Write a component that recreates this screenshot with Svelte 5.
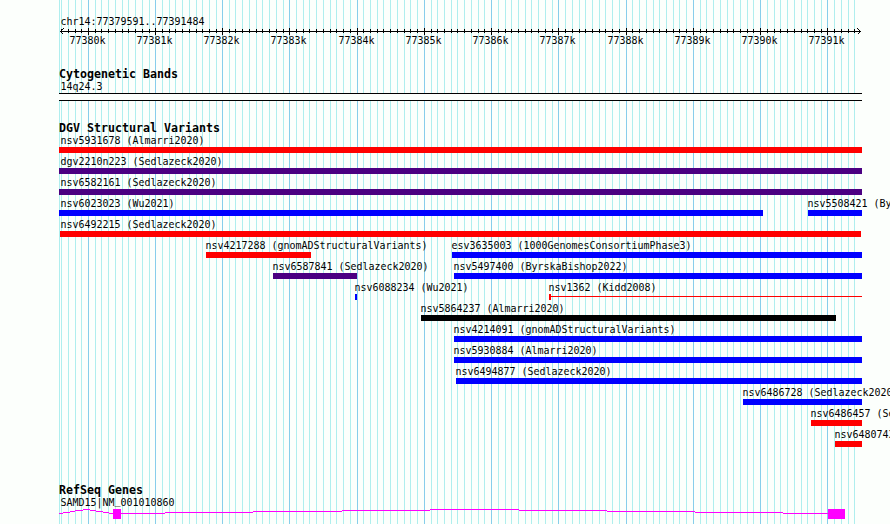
<script>
	// panel geometry
	const regionStart = 77379591;
	const regionEnd = 77391484;
	const panelLeft = 60;
	const scale = 800 / (regionEnd - regionStart);

	// lines sit up to half a pixel further right at the start of the panel
	const toX = (pos) => {
		const drift = pos < 77382000 ? 0.45 : -0.01;
		return Math.round(panelLeft + (pos - regionStart) * scale + drift);
	};

	const minor = [];
	const major = [];
	for (let pos = 77379600; pos <= regionEnd; pos += 100) {
		if (pos % 1000 === 0) {
			major.push({ x: toX(pos), label: pos / 1000 + 'k' });
		} else {
			minor.push(toX(pos));
		}
	}

	const red = '#ff0000';
	const blue = '#0000ff';
	const indigo = '#4b0082';

	// every row is 21px high: label on top, bar underneath
	const rows = [
		[{ name: 'nsv5931678 (Almarri2020)', from: 59, to: 862, color: red }],
		[{ name: 'dgv2210n223 (Sedlazeck2020)', from: 59, to: 862, color: indigo }],
		[{ name: 'nsv6582161 (Sedlazeck2020)', from: 59, to: 862, color: indigo }],
		[
			{ name: 'nsv6023023 (Wu2021)', from: 59, to: 763, color: blue },
			{ name: 'nsv5508421 (ByrskaBishop2022)', from: 808, to: 862, color: blue }
		],
		[{ name: 'nsv6492215 (Sedlazeck2020)', from: 60, to: 861, color: red }],
		[
			{ name: 'nsv4217288 (gnomADStructuralVariants)', from: 206, to: 311, color: red },
			{ name: 'esv3635003 (1000GenomesConsortiumPhase3)', from: 452, to: 862, color: blue }
		],
		[
			{ name: 'nsv6587841 (Sedlazeck2020)', from: 273, to: 357, color: indigo },
			{ name: 'nsv5497400 (ByrskaBishop2022)', from: 454, to: 862, color: blue }
		],
		[
			{ name: 'nsv6088234 (Wu2021)', from: 355, to: 357, color: blue },
			{ name: 'nsv1362 (Kidd2008)', from: 549, to: 551, color: red, lineTo: 862 }
		],
		[{ name: 'nsv5864237 (Almarri2020)', from: 421, to: 836, color: '#000000' }],
		[{ name: 'nsv4214091 (gnomADStructuralVariants)', from: 454, to: 862, color: blue }],
		[{ name: 'nsv5930884 (Almarri2020)', from: 454, to: 862, color: blue }],
		[{ name: 'nsv6494877 (Sedlazeck2020)', from: 456, to: 862, color: blue }],
		[{ name: 'nsv6486728 (Sedlazeck2020)', from: 743, to: 862, color: blue }],
		[{ name: 'nsv6486457 (Sedlazeck2020)', from: 811, to: 862, color: red }],
		[{ name: 'nsv6480743 (Sedlazeck2020)', from: 835, to: 862, color: red }]
	];

	const labelX = (f) => (f.from <= 60 ? 60.5 : f.from - 0.5);
</script>

{#snippet text(x, y, value, bold = false)}
	<text
		{x}
		{y}
		class:bold
		textLength={value.length * (bold ? 7 : 6)}
		lengthAdjust="spacingAndGlyphs">{value}</text
	>
{/snippet}

<main class="browser">
	<svg class="tracks" width="890" height="524" viewBox="0 0 890 524" shape-rendering="crispEdges">
		<!-- grid -->
		<rect class="minor" x="59" y="0" width="1" height="524" />
		{#each minor as x}
			<rect class="minor" {x} y="0" width="1" height="524" />
		{/each}
		{#each major as m}
			<rect class="major" x={m.x} y="0" width="1" height="524" />
		{/each}

		<!-- ruler -->
		{@render text(60.5, 25, 'chr14:77379591..77391484')}
		<rect x="60" y="31" width="801" height="1" />
		<path class="arrow" d="M63.5 28.5L60.5 31.5L63.5 34.5M857.5 28.5L860.5 31.5L857.5 34.5" />
		{#each minor as x}
			<rect {x} y="29" width="1" height="4" />
		{/each}
		{#each major as m}
			<rect x={m.x} y="28" width="1" height="7" />
			{@render text(m.x - 18.5, 44, m.label)}
		{/each}

		<!-- cytoband -->
		{@render text(59, 78, 'Cytogenetic Bands', true)}
		{@render text(60.5, 90, '14q24.3')}
		<rect x="59" y="93" width="803" height="8" />
		<rect class="band" x="59" y="94" width="803" height="6" />

		<!-- structural variants -->
		{@render text(59, 132, 'DGV Structural Variants', true)}
		{#each rows as row, i}
			{#each row as f}
				<rect x={f.from} y={147 + i * 21} width={f.to - f.from} height="6" fill={f.color} />
				{#if f.lineTo}
					<rect x={f.to} y={149 + i * 21} width={f.lineTo - f.to} height="1" fill={f.color} />
				{/if}
				{@render text(labelX(f), 144 + i * 21, f.name)}
			{/each}
		{/each}

		<!-- genes -->
		{@render text(59, 494, 'RefSeq Genes', true)}
		<path
			class="intron"
			d="M59 513.5H63M63 512.5H70M70 511.5H75M75 510.5H83M83 509.5H90M90 510.5H96M96 511.5H103M103 512.5H109M109 513.5H165M165 512.5H253M253 511.5H342M342 510.5H430M430 509.5H519M519 510.5H607M607 511.5H695M695 512.5H783M783 513.5H828"
		/>
		<rect class="exon" x="113" y="509" width="8" height="10" />
		<rect class="exon" x="828" y="509" width="17" height="10" />
		<!-- underscore is raised so it stays clear of the exon -->
		<text x="60.5" y="506" textLength="114" lengthAdjust="spacingAndGlyphs"
			>SAMD15|NM<tspan dy="-2">_</tspan><tspan dy="2">001010860</tspan></text
		>
	</svg>
</main>

<style>
	:global(body) {
		margin: 0;
		background: #fcfffc;
	}

	.browser {
		width: 890px;
		height: 524px;
		overflow: hidden;
		background: #fcfffc;
	}

	.tracks {
		display: block;
	}

	.minor {
		fill: #afeeee;
	}

	.major {
		fill: #87ceeb;
	}

	.band {
		fill: #fcfffc;
	}

	.arrow {
		fill: none;
		stroke: #000;
	}

	.intron {
		fill: none;
		stroke: #ff00ff;
	}

	.exon {
		fill: #ff00ff;
	}

	text {
		font-family: 'DejaVu Sans Mono', 'Liberation Mono', monospace;
		font-size: 10.6px;
		fill: #000;
		white-space: pre;
	}

	.bold {
		font-size: 11.4px;
		font-weight: 700;
	}
</style>
